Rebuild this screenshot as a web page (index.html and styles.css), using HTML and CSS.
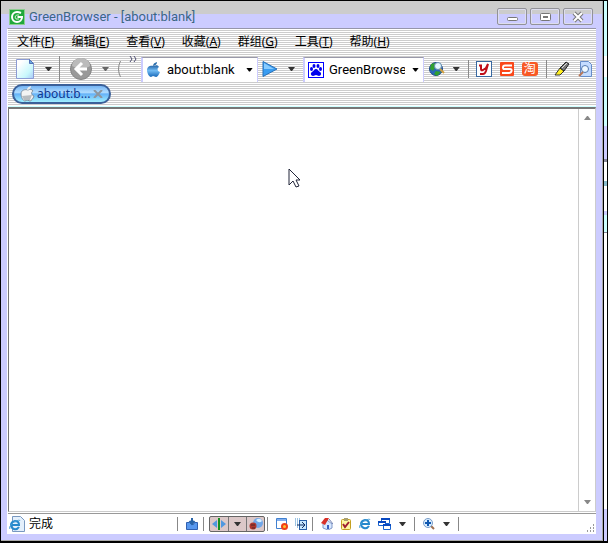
FILE: index.html
```html
<!DOCTYPE html>
<html lang="zh-CN">
<head>
<meta charset="utf-8">
<title>GreenBrowser - [about:blank]</title>
<link rel="stylesheet" href="styles.css">
</head>
<body>
<div class="desktop">
<div class="window">
  <header class="titlebar">
    <svg class="logo" width="16" height="16" viewBox="0 0 16 16"><rect x=".5" y=".5" width="15" height="15" fill="#20a83c" stroke="#8ccc90"/><path d="M12 4Q10 3 8 3a5 5 0 1 0 5 5H8.500" fill="none" stroke="#fff" stroke-width="2"/><path d="M10 6q-3-1-4 2 0 3 4 2" fill="none" stroke="#c8f0c8"/></svg>
    <h1 class="title">GreenBrowser - [about:blank]</h1>
    <div class="controls">
      <button class="control" aria-label="Minimize"><svg width="14" height="12" viewBox="0 0 14 12"><rect x="2.500" y="6.500" width="10" height="3" rx="1" fill="#fff" stroke="#777"/></svg></button>
      <button class="control" aria-label="Maximize"><svg width="14" height="12" viewBox="0 0 14 12"><rect x="2.500" y="2.500" width="10" height="7" rx="1" fill="#fff" stroke="#777"/><rect x="5.500" y="5.500" width="4" height="1" fill="#bbb" stroke="#777"/></svg></button>
      <button class="control" aria-label="Close"><svg width="14" height="12" viewBox="0 0 14 12"><path d="M3 2l8 8M11 2l-8 8" stroke="#777" stroke-width="4"/><path d="M3 2l8 8M11 2l-8 8" stroke="#fff" stroke-width="2"/></svg></button>
    </div>
  </header>
  <div class="client">
    <div class="bars">
      <nav class="menu">
        <button>文件(<u>F</u>)</button><button>编辑(<u>E</u>)</button><button>查看(<u>V</u>)</button><button>收藏(<u>A</u>)</button><button>群组(<u>G</u>)</button><button>工具(<u>T</u>)</button><button>帮助(<u>H</u>)</button>
      </nav>
      <div class="toolbar">
        <div class="group nav-group">
          <button class="tool" aria-label="New page"><svg width="20" height="22" viewBox="0 0 20 22"><defs><linearGradient id="page" x2="1" y2="1"><stop offset=".2" stop-color="#fff"/><stop offset=".7" stop-color="#c8f8fc"/><stop offset="1" stop-color="#a8c8f8"/></linearGradient></defs><path d="M1.500 1.500h13l4 4v15h-17z" fill="url(#page)" stroke="#8c9cd4"/><path d="M14.500 1.500v4h4z" fill="#6aaae0" stroke="#5272b8"/></svg></button>
          <button class="drop" aria-label="New page options"></button>
          <i class="line tall"></i>
          <button class="tool" aria-label="Back"><svg width="22" height="22" viewBox="0 0 22 22"><circle cx="11" cy="11" r="10.500" fill="#999" stroke="#858585"/><path d="M2 8a9 8 0 0 1 18 0c-4 3-13 3-18 0z" fill="#bbb"/><path d="M12 5l-6 6 6 6M7 11h10" fill="none" stroke="#fff" stroke-width="3"/></svg></button>
          <button class="drop muted" aria-label="Back history"></button>
          <svg class="partial" width="4" height="18" viewBox="0 0 4 18"><path d="M3.500 1q-4 8 0 16" fill="none" stroke="#888"/></svg>
          <button class="more" aria-label="More buttons"><svg width="8" height="6" viewBox="0 0 8 6"><path d="M1 0l2 3-2 3M5 0l2 3-2 3" fill="none" stroke="#4c4c70"/></svg></button>
        </div>
        <div class="field address">
          <svg width="16" height="16" viewBox="0 0 16 16"><use href="#apple"/></svg>
          <input aria-label="Address" value="about:blank">
          <button class="drop black" aria-label="Address history"></button>
        </div>
        <div class="group go-group">
          <button class="tool" aria-label="Go"><svg width="16" height="16" viewBox="0 0 16 16"><path d="M1 .5L15 8 1 15.500z" fill="#399df2" stroke="#2870b8"/><path d="M2 2l10 6H2z" fill="#88ccff"/></svg></button>
          <button class="drop" aria-label="Go options"></button>
        </div>
        <div class="field search">
          <svg width="16" height="16" viewBox="0 0 16 16"><rect x=".5" y=".5" width="15" height="15" fill="#fff" stroke="#00f"/><g fill="#00e"><ellipse cx="3.500" cy="7" rx="1.500" ry="2"/><ellipse cx="6" cy="4" rx="1.500" ry="2"/><ellipse cx="10" cy="4" rx="1.500" ry="2"/><ellipse cx="12.500" cy="7" rx="1.500" ry="2"/><path d="M8 7c2 0 2 2 4 3s1 4-1 4l-3-1-3 1c-2 0-3-3-1-4s2-3 4-3z"/></g></svg>
          <input aria-label="Search" value="GreenBrowser">
          <button class="drop black" aria-label="Search engines"></button>
        </div>
        <div class="group extras">
          <button class="tool" aria-label="Search web"><svg width="16" height="16" viewBox="0 0 16 16"><circle cx="7" cy="8" r="6.500" fill="#2868b8" stroke="#224a88"/><path d="M2 3l4-1 1 3-3 5-3-2zM7 10l5 1-4 4-3-2z" fill="#30a030"/><circle cx="9" cy="5" r="3.500" fill="#e4f8ff" stroke="#648cb0"/><path d="M11 8l4 4" stroke="#d0a040" stroke-width="2"/></svg></button>
          <button class="drop" aria-label="Search options"></button>
          <i class="line"></i>
          <button class="tool" aria-label="Yahoo"><svg width="16" height="16" viewBox="0 0 16 16"><rect x=".5" y=".5" width="15" height="15" fill="#fff" stroke="#3868a0"/><path d="M3 4.500h2L5 8q0 2 2 1l3-2 2-4-2 7q-1 3-3 3H4" fill="none" stroke="#c00d18" stroke-width="2"/></svg></button>
          <button class="tool" aria-label="Sogou"><svg width="14" height="14" viewBox="0 0 14 14"><rect width="14" height="14" rx="1" fill="#fa481b"/><path d="M12 3.500H5q-2 0-2 2t2 1.500h5q2 0 1.500 2T9 11H2" fill="none" stroke="#fff" stroke-width="2"/></svg></button>
          <button class="tool taobao" aria-label="Taobao">淘</button>
          <i class="line"></i>
          <button class="tool" aria-label="Highlight"><svg width="16" height="16" viewBox="0 0 16 16"><path d="M1 14l5-7 4 3-4 4z" fill="#ffef20" stroke="#333"/><path d="M6 7l6-6 3 2-5 7z" fill="#777" stroke="#222"/><path d="M8 7l5-5" stroke="#ddd"/></svg></button>
          <button class="tool" aria-label="Find in page"><svg width="14" height="16" viewBox="0 0 14 16"><path d="M2.500.5h8l3 3v12h-11z" fill="#c4dcff" stroke="#668cc8"/><circle cx="7" cy="8" r="3.500" fill="#eef8ff" stroke="#5278b0"/><path d="M5 11l-4 4" stroke="#b87858" stroke-width="2"/></svg></button>
        </div>
      </div>
      <div class="tabs">
        <div class="tab"><svg width="16" height="16" viewBox="0 0 16 16"><use href="#apple-white"/></svg><span>about:b...</span><button aria-label="Close tab"><svg width="10" height="8" viewBox="0 0 10 8"><path d="M1 0l8 8M9 0L1 8" stroke="#8c96a0" stroke-width="2"/></svg></button></div>
      </div>
    </div>
    <main class="page">
      <div class="scrollbar"><svg width="7" height="4" viewBox="0 0 7 4"><path d="M3 0h1l3 4H0z" fill="#888"/></svg><svg width="7" height="4" viewBox="0 0 7 4"><path d="M0 0h7L4 4H3z" fill="#888"/></svg></div>
      <svg class="cursor" width="13" height="20" viewBox="0 0 13 20"><path d="M1 1v16l4-4 3 6 3-1-3-6h4z" fill="#fff" stroke="#202438"/></svg>
    </main>
    <footer class="status">
      <svg width="16" height="16" viewBox="0 0 16 16"><path d="M3.500.5h8l4 4v11h-12z" fill="#e4f0fc" stroke="#7898c0"/><use href="#ie"/></svg>
      <span class="message">完成</span>
      <div class="status-tools">
        <i class="line"></i>
        <button aria-label="Downloads"><svg width="12" height="12" viewBox="0 0 12 12"><path d="M.5 4.500h3l2 2h2l1-2h3v7H.5z" fill="#5898ee" stroke="#3060b0"/><path d="M6 0v5M3.500 3L6 6l2.500-3" fill="none" stroke="#2864a8" stroke-width="2"/></svg></button>
        <i class="line"></i>
        <div class="pressed">
          <button aria-label="Split view"><svg width="14" height="12" viewBox="0 0 14 12"><path d="M0 6l5-4v8zM14 6L9 2v8z" fill="#4f98e0"/><path d="M7 0v12" stroke="#169020" stroke-width="2"/></svg></button><button aria-label="Split options"><b class="drop"></b></button><button aria-label="Filter"><svg width="14" height="12" viewBox="0 0 14 12"><circle cx="9" cy="5" r="5" fill="#71a7e8"/><path d="M7 2q4-3 6 1-3 3-6-1z" fill="#d8f0ff"/><circle cx="4" cy="8" r="3.500" fill="#ae352c"/><path d="M2 7h4M3 10h3" stroke="#502828"/></svg></button>
        </div>
        <i class="line"></i>
        <button aria-label="Block pop-ups"><svg width="12" height="12" viewBox="0 0 12 12"><path d="M.5.5h10v10H.5z" fill="#fff" stroke="#4080d0"/><path d="M1 2h9" stroke="#84b0ee" stroke-width="2"/><circle cx="8.500" cy="8.500" r="2.500" fill="#ffc030" stroke="#f04018" stroke-width="2"/></svg></button>
        <button aria-label="Auto hide"><svg width="12" height="12" viewBox="0 0 12 12"><path d="M0 1h6M0 3h6M0 5h4M0 7h4M2 9h3" stroke="#3888c8" stroke-dasharray="1 1"/><rect x="4.500" y="2.500" width="7" height="9" fill="#c8e8ff" stroke="#2860a8"/><path d="M2 7h7M7 4l3 3-3 3" fill="none" stroke="#102c60"/></svg></button>
        <i class="line"></i>
        <button aria-label="Home"><svg width="12" height="12" viewBox="0 0 12 12"><path d="M2 6l4-4 5 4v4l-4 2-5-2z" fill="#d8e8ff" stroke="#8098c8"/><path d="M0 5l4-5h4L4 7z" fill="#d83028"/><path d="M8 1l4 5" stroke="#7080b0"/><rect x="6" y="7" width="2" height="4" fill="#3860c0"/></svg></button>
        <button aria-label="Tasks"><svg width="12" height="12" viewBox="0 0 12 12"><rect x="1.500" y="1.500" width="9" height="10" rx="1" fill="#fff7a0" stroke="#c4a020"/><path d="M4 0h4v3H4z" fill="#a8a070"/><path d="M3 6l2 3 4-5" fill="none" stroke="#a02030" stroke-width="2"/></svg></button>
        <button aria-label="Open in IE"><svg width="12" height="12" viewBox="0 3 12 12"><use href="#ie"/></svg></button>
        <button aria-label="Windows"><svg width="13" height="12" viewBox="0 0 13 12"><g fill="#fff" stroke="#1864d0"><path d="M3.500.5h8v5h-8z"/><path d="M.5 3.500h7v4h-7zM5.500 6.500h7v5h-7z"/></g><path d="M3 1h9M0 4h8M5 7h8" stroke="#0848c0" stroke-width="2"/></svg></button>
        <button class="drop" aria-label="Window options"></button>
        <i class="line"></i>
        <button aria-label="Zoom"><svg width="12" height="12" viewBox="0 0 12 12"><path d="M8 8l3 3" stroke="#a07050" stroke-width="2"/><circle cx="5" cy="5" r="4.500" fill="#d8ecff" stroke="#789cc8"/><path d="M5 2v6M2 5h6" stroke="#1058b0" stroke-width="2"/></svg></button>
        <button class="drop" aria-label="Zoom options"></button>
        <i class="line"></i>
      </div>
      <svg class="grip" width="8" height="8" viewBox="0 0 8 8"><path d="M6 0h1v2H6zM6 3h1v2H6zM6 6h1v2H6zM3 3h1v2H3zM3 6h1v2H3zM0 6h1v2H0z" fill="#999"/></svg>
    </footer>
  </div>
</div>
<div class="behind"></div>
</div>
<svg class="symbols" aria-hidden="true"><defs>
  <linearGradient id="blue" x2="0" y2="1"><stop stop-color="#2464a8"/><stop offset=".45" stop-color="#72bcf4"/><stop offset="1" stop-color="#1868b8"/></linearGradient>
  <g id="apple"><path d="M8 4c2-1 4-1 5 1-2 1-2 4 1 5-1 3-3 5-4 5l-3-1-2 1C3 15 1 11 1 8c0-4 4-5 7-4z" fill="url(#blue)"/><path d="M7 4q0-3 4-4 0 3-4 4z" fill="#286caa"/></g>
  <g id="apple-white"><path d="M8 4c2-1 4-1 5 1-2 1-2 4 1 5-1 3-3 5-4 5l-3-1-2 1C3 15 1 11 1 8c0-4 4-5 7-4z" fill="#f3f3f3" stroke="#8090a0"/><path d="M2 10l10-1-2 5H4z" fill="#b8bcc0"/><path d="M7 4q0-3 4-4 0 3-4 4z" fill="#eee"/></g>
  <g id="ie"><path d="M10 11q-2 3-5 2-3-1-3-4t4-4q4 0 4 4H2" fill="none" stroke="#2588cc" stroke-width="2"/><path d="M1 13q-2-2 4-7 6-3 6-1" fill="none" stroke="#4ba0d8"/></g>
</defs></svg>
</body>
</html>
```

FILE: styles.css
```css
* { box-sizing: border-box; }
body { margin: 0; background: #000; color: #000; font: 12px/16px "Noto Sans", "Noto Sans CJK SC", sans-serif; }
button { display: flex; flex: none; align-items: center; justify-content: center; margin: 0; padding: 0; border: 0; background: none; color: inherit; font: inherit; }
svg { display: block; flex: none; }
.symbols { position: absolute; width: 0; height: 0; }
.desktop { display: flex; height: 100vh; padding: 1px 1px 2px; }
.window { display: flex; flex: 1; flex-direction: column; min-width: 0; padding: 0 6px 6px; background: linear-gradient(#ccc 13px, #ccf 13px); border-right: 1px solid #aaa; border-bottom: 1px solid #aaa; }
.behind { width: 4px; border-left: 1px solid #000; background: linear-gradient(#cff 55px, #fff 55px 76px, #cff 76px 125px, #ccf 125px 158px, #889 158px 161px, #fff 161px 180px, #8bc 180px 185px, #fff 185px 210px, #ccf 210px 214px, #cff 214px 231px, #889 231px 232px, #fff 232px 508px, #ccf 508px); }
.titlebar { display: flex; flex: none; align-items: center; height: 27px; padding: 4px 3px 0 2px; }
.title { flex: 1; margin: 0 4px; color: #3b6784; font-family: Roboto, sans-serif; font-size: 13px; font-weight: 400; }
.controls { display: flex; gap: 3px; }
.control { width: 30px; height: 17px; border: 1px solid #929299; border-radius: 2px; box-shadow: inset 0 0 0 1px #dde; }
.client { display: flex; flex: 1; flex-direction: column; min-height: 0; border-top: 1px solid #9696aa; border-left: 1px solid #fff; background: #fff; }
.bars { flex: none; background: repeating-linear-gradient(#fff 0 1px, #ccc 1px 2px); }
.menu { display: flex; gap: 17px; height: 25px; padding: 0 9px; align-items: center; }
.menu button { white-space: nowrap; }
.toolbar { display: flex; height: 30px; align-items: center; }
.group { display: flex; flex: none; align-items: center; }
.nav-group { width: 133px; padding-left: 7px; }
.drop { display: block; width: 7px; height: 4px; background: #333; clip-path: polygon(0 0, 100% 0, 57% 100%, 43% 100%); }
.nav-group .drop { margin-left: 10px; }
.muted { background: #666; }
.black { background: #000; }
.line { flex: none; width: 1px; height: 18px; background: #888; }
.tall { height: 26px; margin: 0 10px 0 7px; }
.partial { margin-left: 8px; }
.more { align-self: flex-start; margin-left: 8px; }
.field { display: flex; flex: none; align-items: center; height: 25px; padding: 0 4px 0 3px; border-top: 1px solid #99a; border-left: 2px solid #ccf; border-right: 1px solid #ccf; background: #fff; }
.field input { flex: 1; min-width: 0; margin: 0 7px 0 5px; padding: 0; border: 0; outline: 0; background: none; color: #000; font-family: Roboto, sans-serif; font-size: 13px; line-height: 16px; }
.address { width: 117px; }
.go-group { gap: 10px; width: 45px; padding-left: 4px; }
.search { width: 121px; }
.extras { flex: 1; padding: 0 4px 0 5px; justify-content: space-between; }
.taobao { width: 16px; height: 14px; border-radius: 3px; background: #f85824; color: #fff; font-size: 12px; line-height: 14px; }
.tabs { height: 23px; border-bottom: 1px solid #cff; }
.tab { display: flex; align-items: center; width: 99px; height: 20px; margin-left: 4px; padding: 0 6px; border: 2px solid #3b6099; border-radius: 10px; background: linear-gradient(#74b4f4, #b0dcff 40%, #66b2f8 50%, #a0f0ff); color: #103890; }
.tab span { flex: 1; margin-left: 1px; white-space: nowrap; }
.page { position: relative; display: flex; flex: 1; justify-content: flex-end; border: 1px solid #ccc; border-top: 2px solid #777; border-left: 1px solid #777; }
.scrollbar { display: flex; flex-direction: column; align-items: center; justify-content: space-between; width: 17px; padding: 7px 0; border-left: 1px solid #ccc; }
.cursor { position: absolute; left: 279px; top: 59px; }
.status { position: relative; display: flex; flex: none; align-items: center; height: 21px; margin-top: 1px; padding: 0 1px; border-top: 1px solid #999; }
.message { width: 150px; margin-left: 4px; }
.status-tools { display: flex; align-items: center; gap: 7px; }
.status .line { height: 14px; margin: 0 1px 0 -2px; }
.status-tools > .drop { margin: 0 3px 0 1px; }
.pressed { display: flex; height: 16px; margin: 0 -3px; border: 1px solid #666; border-radius: 2px; background: #dcc8c8; }
.pressed button { width: 18px; }
.pressed button + button { border-left: 1px solid #777; }
.grip { position: absolute; right: 1px; bottom: 2px; }
```
